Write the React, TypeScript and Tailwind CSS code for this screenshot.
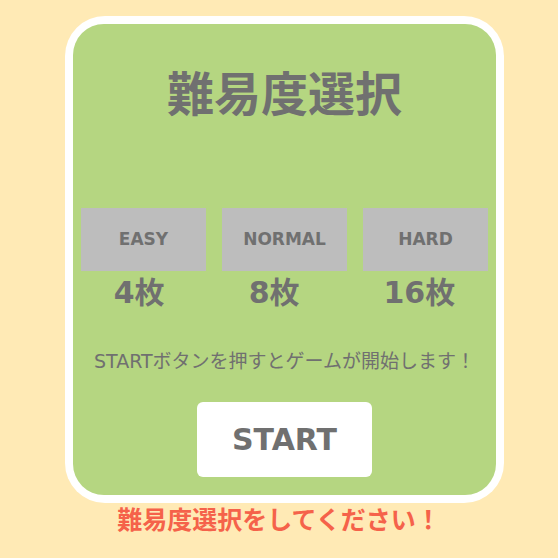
import React from "react";

export default function App() {
  const font = { fontFamily: '"DejaVu Sans", "Noto Sans CJK JP", sans-serif' };
  const levels = ["EASY", "NORMAL", "HARD"];
  const counts = ["4枚", "8枚", "16枚"];
  return (
    <div className="w-[558px] h-[558px] bg-[#ffeab5] flex flex-col pt-[16px]" style={font}>
      <div className="ml-[65px] w-[439px] h-[487px] bg-white rounded-[40px] p-[8px]">
        <div className="w-full h-full bg-[#b5d681] rounded-[31px] flex flex-col items-center">
          <h1 className="mt-[42px] h-[58px] text-[47px] leading-[58px] font-bold text-[#707070]">難易度選択</h1>
          <div className="mt-[84px] flex gap-[16px]">
            {levels.map((l) => (
              <div
                key={l}
                className="w-[125px] h-[63px] bg-[#bdbdbd] flex items-center justify-center text-[17px] font-bold text-[#707070]"
              >
                {l}
              </div>
            ))}
          </div>
          <div className="flex justify-center gap-[84px]">
            {counts.map((c) => (
              <div key={c} className="text-[30px] leading-[44px] font-bold text-[#707070]">
                {c}
              </div>
            ))}
          </div>
          <p className="mt-[33px] text-[19px] leading-[26px] text-[#707070]">STARTボタンを押すとゲームが開始します！</p>
          <button className="mt-[28px] w-[175px] h-[75px] bg-white rounded-[6px] text-[30px] font-bold text-[#707070]">
            START
          </button>
        </div>
      </div>
      <div className="mt-[2px] text-center text-[25px] leading-[32px] font-bold text-[#f5624a]">難易度選択をしてください！</div>
    </div>
  );
}
